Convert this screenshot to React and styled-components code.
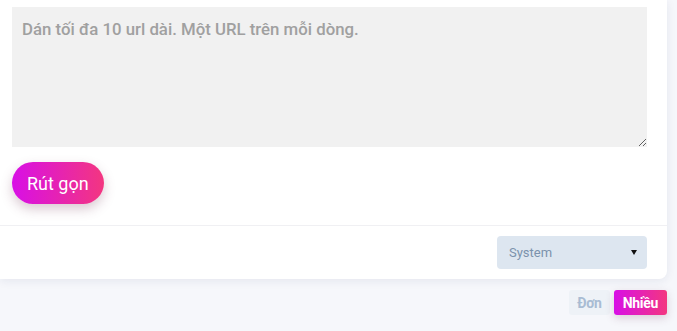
import styled, { createGlobalStyle } from "styled-components";

const GlobalStyle = createGlobalStyle`
  html, body {
    margin: 0;
    padding: 0;
    background: #f6f7fb;
    font-family: Roboto, "Noto Sans", Arial, sans-serif;
  }
`;

const Page = styled.div`
  width: 677px;
  height: 331px;
  overflow: hidden;
`;

const Card = styled.div`
  width: 667px;
  background: #ffffff;
  border-radius: 0 0 8px 0;
  box-shadow: 0 2px 10px rgba(30, 40, 90, 0.08);
`;

const Body = styled.div`
  display: flex;
  flex-direction: column;
  align-items: flex-start;
  gap: 15px;
  padding: 7px 20px 21px 12px;
`;

const UrlBox = styled.textarea`
  box-sizing: border-box;
  width: 635px;
  height: 140px;
  margin: 0;
  padding: 10px 10px;
  border: none;
  outline: none;
  background: #f1f1f1;
  font-family: Roboto, "Noto Sans", Arial, sans-serif;
  font-size: 16.8px;
  font-weight: 500;
  line-height: 24px;
  color: #333;
  resize: vertical;

  &::placeholder {
    color: #a0a0a0;
  }
`;

const Gradient = "linear-gradient(90deg, #d80fe6 0%, #f33680 100%)";

const ShortenButton = styled.button`
  height: 42px;
  padding: 0 15px;
  border: none;
  border-radius: 21px;
  background: ${Gradient};
  color: #ffffff;
  font-family: Roboto, "Noto Sans", Arial, sans-serif;
  font-size: 18px;
  box-shadow: 0 5px 12px rgba(120, 60, 90, 0.28);
  cursor: pointer;
`;

const Footer = styled.div`
  display: flex;
  justify-content: flex-end;
  padding: 10px 20px 10px 12px;
  border-top: 1px solid #f0f0f3;
`;

const SelectWrap = styled.div`
  position: relative;
  width: 150px;
  height: 33px;
`;

const ThemeSelect = styled.select`
  appearance: none;
  width: 100%;
  height: 100%;
  padding: 0 12px;
  border: none;
  border-radius: 4px;
  background: #dde6f0;
  color: #7b92ac;
  font-family: Roboto, "Noto Sans", Arial, sans-serif;
  font-size: 13px;
  outline: none;
`;

const Arrow = styled.span`
  position: absolute;
  right: 10px;
  top: 14px;
  width: 0;
  height: 0;
  border-left: 3.5px solid transparent;
  border-right: 3.5px solid transparent;
  border-top: 5px solid #111;
  pointer-events: none;
`;

const ModeBar = styled.div`
  display: flex;
  justify-content: flex-end;
  gap: 4px;
  padding: 11px 10px 0 0;
`;

const ModeButton = styled.button`
  height: 25px;
  padding: 0 ${(p) => (p.$active ? "9px" : "8px")};
  border: none;
  border-radius: 3px;
  background: ${(p) => (p.$active ? Gradient : "#eef2f7")};
  color: ${(p) => (p.$active ? "#ffffff" : "#a9bcd3")};
  font-family: Roboto, "Noto Sans", Arial, sans-serif;
  font-size: 14px;
  font-weight: 700;
  letter-spacing: -0.3px;
  box-shadow: ${(p) => (p.$active ? "0 3px 8px rgba(120, 60, 90, 0.22)" : "none")};
`;

export default function App() {
  return (
    <Page>
      <GlobalStyle />
      <Card>
        <Body>
          <UrlBox placeholder="Dán tối đa 10 url dài. Một URL trên mỗi dòng." />
          <ShortenButton>Rút gọn</ShortenButton>
        </Body>
        <Footer>
          <SelectWrap>
            <ThemeSelect defaultValue="system">
              <option value="system">System</option>
              <option value="light">Light</option>
              <option value="dark">Dark</option>
            </ThemeSelect>
            <Arrow />
          </SelectWrap>
        </Footer>
      </Card>
      <ModeBar>
        <ModeButton>Đơn</ModeButton>
        <ModeButton $active>Nhiều</ModeButton>
      </ModeBar>
    </Page>
  );
}
